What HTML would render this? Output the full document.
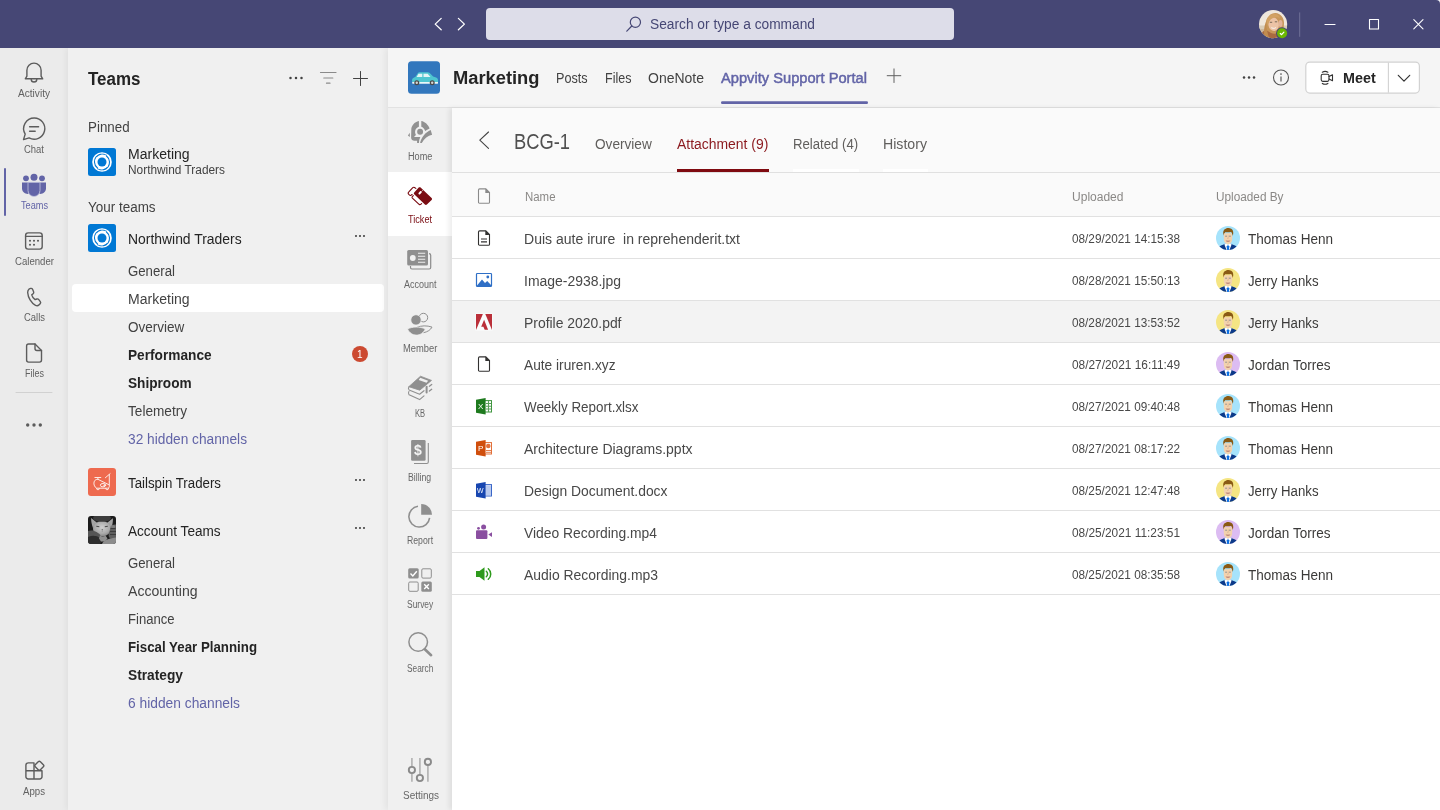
<!DOCTYPE html>
<html lang="en">
<head>
<meta charset="utf-8">
<title>Marketing - Appvity Support Portal</title>
<style>
*{box-sizing:border-box;margin:0;padding:0}
html,body{width:1440px;height:810px;overflow:hidden;background:#f5f5f5}
body{font-family:"Liberation Sans",sans-serif;color:#252423;position:relative}
.a{position:absolute}
.t{position:absolute;white-space:pre;line-height:1;transform-origin:0 50%}
svg{position:absolute;overflow:visible}
#titlebar{left:0;top:0;width:1440px;height:48px;background:#464775}
#search{left:486px;top:8px;width:468px;height:32px;border-radius:4px;background:#dddde9}
#rail{left:0;top:48px;width:68px;height:762px;background:#ebebeb}
#list{left:68px;top:48px;width:320px;height:762px;background:#f0f0f0;box-shadow:-2px 0 6px rgba(0,0,0,.05)}
#main{left:388px;top:48px;width:1052px;height:762px;background:#f5f5f5;box-shadow:-3px 0 6px rgba(0,0,0,.055)}
#hdrline{left:388px;top:107px;width:1052px;height:1px;background:#e2e2e2}
#appnav{left:388px;top:108px;width:64px;height:702px;background:#f0f0f0}
#navsel{left:388px;top:172px;width:64px;height:64px;background:#fff}
#content{left:452px;top:108px;width:988px;height:702px;background:#fff;box-shadow:-3px 0 5px rgba(0,0,0,.075)}
#subhdr{left:452px;top:108px;width:988px;height:64px;background:#fafafa}
#subline{left:452px;top:172px;width:988px;height:1px;background:#e0e0e0}
#thead{left:452px;top:173px;width:988px;height:43px;background:#fafafa}
.ln{position:absolute;left:452px;width:988px;height:1px;background:#e1e1e1}
#hover{left:452px;top:301px;width:988px;height:41px;background:#f3f3f3}
#chsel{left:72px;top:284px;width:312px;height:28px;border-radius:4px;background:#fff}
.av{position:absolute;width:24px;height:24px;border-radius:50%;left:1216px;overflow:hidden}
</style>
</head>
<body>
<div id="rail" class="a"></div>
<div id="list" class="a"></div>
<div id="chsel" class="a"></div>
<div id="main" class="a"></div>
<div id="hdrline" class="a"></div>
<div id="appnav" class="a"></div>
<div id="navsel" class="a"></div>
<div id="content" class="a"></div>
<div id="subhdr" class="a"></div>
<div id="subline" class="a"></div>
<div id="thead" class="a"></div>
<div id="hover" class="a"></div>
<div id="titlebar" class="a"></div>
<div id="search" class="a"></div>
<div class="ln" style="top:216px"></div>
<div class="ln" style="top:258px"></div>
<div class="ln" style="top:300px"></div>
<div class="ln" style="top:342px"></div>
<div class="ln" style="top:384px"></div>
<div class="ln" style="top:426px"></div>
<div class="ln" style="top:468px"></div>
<div class="ln" style="top:510px"></div>
<div class="ln" style="top:552px"></div>
<div class="ln" style="top:594px"></div>

<!-- rail icons -->
<svg style="left:0;top:0" width="68" height="810" viewBox="0 0 68 810" fill="none" stroke="#5c5c5c" stroke-width="1.4" stroke-linecap="round" stroke-linejoin="round">
<!-- bell -->
<path d="M26.9 76.2v-6a7.1 7.1 0 0 1 14.2 0v6l1.6 2.6h-17.4z"/>
<path d="M31.2 79.2a2.8 2.8 0 0 0 5.6 0"/>
<!-- chat -->
<path d="M34.3 118a10.6 10.6 0 1 1-5.2 19.9l-5.6 1.7 1.7-5.5A10.6 10.6 0 0 1 34.3 118z"/>
<path d="M29.6 126.7h9M29.6 131.3h5.6"/>
<!-- calendar -->
<rect x="25.6" y="232.9" width="16.6" height="16.2" rx="2.6"/>
<path d="M25.6 236.4h16.6"/>
<g fill="#5c5c5c" stroke="none"><circle cx="30" cy="240.8" r="1.05"/><circle cx="34" cy="240.8" r="1.05"/><circle cx="38" cy="240.8" r="1.05"/><circle cx="30" cy="244.8" r="1.05"/><circle cx="34" cy="244.8" r="1.05"/></g>
<!-- calls -->
<path d="M29.6 288.2l1.6-.5c1-.3 2 .2 2.400 1.100l1.300 3c.4.900.1 1.900-.600 2.500l-1.700 1.400c.5 1.900 2.400 4.800 4.200 5.900l2.100-.7c.9-.3 1.900 0 2.500.8l1.900 2.500c.6.800.5 1.900-.200 2.600l-1.200 1.200c-1.200 1.200-3 1.600-4.600.8-5.500-2.800-9.300-9.700-9.800-16.100-.1-1.900 1-3.500 2.100-4.500z" transform="translate(34.150 297) scale(.8) translate(-35.600 -298.400)" vector-effect="non-scaling-stroke"/>
<!-- files -->
<path d="M28.600 344h6.400l6.500 6.500v9.600a2 2 0 0 1-2 2h-10.900a2 2 0 0 1-2-2v-14.100a2 2 0 0 1 2-2z"/>
<path d="M35 344v4.500a2 2 0 0 0 2 2h4.500"/>
<!-- sep -->
<path d="M16 392.500h36" stroke="#d1d1d1" stroke-width="1"/>
<!-- dots -->
<g fill="#5c5c5c" stroke="none"><circle cx="27.700" cy="425" r="1.700"/><circle cx="34" cy="425" r="1.700"/><circle cx="40.300" cy="425" r="1.700"/></g>
<!-- apps -->
<path d="M34 762.900v16.100M25.900 770.800h16.100M28.200 762.900h5.800M25.900 765.200a2.300 2.300 0 0 1 2.300-2.300M25.900 765.200v11.500a2.300 2.300 0 0 0 2.300 2.300h11.500a2.300 2.300 0 0 0 2.300-2.300v-5.900"/>
<rect x="35.700" y="762.100" width="7.200" height="7.200" rx="1.500" transform="rotate(45 39.300 765.700)"/>
</svg>
<!-- teams icon (active) -->
<svg style="left:0;top:160px" width="68" height="60" viewBox="0 160 68 60">
<rect x="4" y="168" width="2" height="48" rx="1" fill="#6264a7"/>
<g fill="#6264a7">
<circle cx="26" cy="178.300" r="2.900"/><circle cx="42" cy="178.300" r="2.900"/><circle cx="34" cy="177.300" r="3.500"/>
<path d="M22 182.600h6.500v11.300c-3.700.300-6.500-2.300-6.500-5.400z"/>
<path d="M46 182.600h-6.500v11.300c3.700.300 6.500-2.300 6.500-5.400z"/>
<path d="M28 182.300h12v8.200a6 6 0 0 1-12 0z" stroke="#c5c6e0" stroke-width="0.800"/>
</g>
</svg>
<!-- title bar -->
<svg style="left:0;top:0" width="1440" height="48" viewBox="0 0 1440 48" fill="none" stroke="#fff" stroke-width="1.1" stroke-linecap="round" stroke-linejoin="round">
<path d="M441.200 18.400l-6 5.700 6 5.700M458.400 18.400l6 5.700-6 5.700" stroke-width="1.300"/>
<g stroke="#464775" stroke-width="1.200"><circle cx="635.400" cy="22.200" r="5.100"/><path d="M631.800 26l-5 5.200"/></g>
<path d="M1299.700 12.800v23.600" stroke="#6f7097" stroke-width="1"/>
<path d="M1325 24.500h10"/>
<rect x="1369.500" y="19.500" width="9" height="9.500"/>
<path d="M1413.800 19.600l9.200 9.200M1423 19.600l-9.200 9.200"/>
</svg>
<!-- window corner -->
<svg style="left:1436px;top:0" width="4" height="4" viewBox="0 0 4 4"><path d="M0 0h4v4a4 4 0 0 0-4-4z" fill="#f3f3f8"/></svg>
<!-- user avatar -->
<svg style="left:1259px;top:9.800px" width="29" height="29" viewBox="0 0 29 29">
<defs><clipPath id="uav"><circle cx="14.100" cy="14.100" r="14.100"/></clipPath>
<filter id="ubl" x="-20%" y="-20%" width="140%" height="140%"><feGaussianBlur stdDeviation=".5"/></filter></defs>
<g clip-path="url(#uav)">
<rect width="29" height="29" fill="#efe7dc"/>
<g filter="url(#ubl)">
<rect x="-5" y="15.500" width="39" height="4" fill="#d9cdb8"/>
<rect x="-5" y="19" width="39" height="15" fill="#cdb79c"/>
<path d="M6 30c-1-5 0-9 1-12-1-5 0-9 3-12 2.500-3 7-4 10-2 3 1.500 5 5 5 9 0 5-1 8-3 11l-1 6z" fill="#c8975a"/>
<ellipse cx="14.600" cy="14.200" rx="5.300" ry="6.800" fill="#ecc3a6" transform="rotate(-8 14.600 14.200)"/>
<path d="M8 9c1.500-3.500 5-5.500 8.500-5 2.500.5 4 2 4.600 4.500-2.500-1.500-5-1.500-7.500-.2-2.500 1.200-4 3.500-4.600 7.200-1.200-2-1.700-4.300-1-6.500z" fill="#d2a163"/>
<path d="M1 30c0-5 2-9 6-10l5 3c2 1 5 1 7 0l1 7z" fill="#a96a40"/>
<path d="M7 12c-2 4-2.500 10-1.500 16l5 1c-2-5-3-11-3.500-17z" fill="#c18c50"/>
<ellipse cx="21.500" cy="13.500" rx="2" ry="3.500" fill="#e3b49a"/>
<path d="M10.800 12.300h2.400M15.800 11.800h2.400" stroke="#7d6a58" stroke-width="1"/>
<path d="M12.300 17.500c1.300 1 3.300 1 4.700-.2" stroke="#f5eae2" stroke-width="1.100" fill="none"/>
</g>
</g>
<circle cx="23.100" cy="23.200" r="6" fill="#464775"/>
<circle cx="23.100" cy="23.200" r="5" fill="#6bb700"/>
<path d="M21.300 23.500l1.300 1.200 2.300-2.600" fill="none" stroke="#fff" stroke-width="1.200" stroke-linecap="round" stroke-linejoin="round"/>
</svg>
<!-- list header icons -->
<svg style="left:68px;top:48px" width="320" height="60" viewBox="68 48 320 60" fill="none" stroke="#424242" stroke-width="1" stroke-linecap="round">
<g fill="#424242" stroke="none"><circle cx="290.500" cy="78" r="1.250"/><circle cx="296" cy="78" r="1.250"/><circle cx="301.500" cy="78" r="1.250"/></g>
<path d="M320.500 72.500h15.500M323.800 78h9M326.500 83.200h3.500" stroke="#8a8a8a" stroke-width="1.200"/>
<path d="M353.500 78.500h14M360.500 71.500v14"/>
</svg>
<!-- team dots -->
<svg style="left:350px;top:230px" width="20" height="310" viewBox="350 230 20 310" fill="#424242">
<circle cx="356" cy="236" r="1.050"/><circle cx="360" cy="236" r="1.050"/><circle cx="364" cy="236" r="1.050"/>
<circle cx="356" cy="480" r="1.050"/><circle cx="360" cy="480" r="1.050"/><circle cx="364" cy="480" r="1.050"/>
<circle cx="356" cy="528" r="1.050"/><circle cx="360" cy="528" r="1.050"/><circle cx="364" cy="528" r="1.050"/>
</svg>
<!-- badge -->
<div class="a" style="left:352px;top:346px;width:16px;height:16px;border-radius:50%;background:#cc4a31"></div>
<!-- northwind logos -->
<svg style="left:88px;top:148px" width="28" height="28" viewBox="0 0 28 28"><defs><g id="nw"><rect width="28" height="28" rx="2.500" fill="#0078d4"/><circle cx="14" cy="14" r="9.800" fill="#fff"/><g fill="none" stroke="#0078d4" stroke-linecap="round"><path d="M12.300 6.200c-3.500 1-6 4.300-5.800 8 .1 2.500 1.300 4.500 3 5.800" stroke-width="1.100"/><path d="M15.700 21.800c3.500-1 6-4.300 5.800-8-.1-2.500-1.300-4.500-3-5.800" stroke-width="1.100"/><path d="M9.500 20.800c3.300 2 7.600 1.300 10-1.600" stroke-width=".9"/><path d="M18.500 7.200c-3.300-2-7.600-1.300-10 1.600" stroke-width=".9"/></g><circle cx="14" cy="14" r="4.500" fill="#0078d4"/></g></defs><use href="#nw"/></svg>
<svg style="left:88px;top:224px" width="28" height="28" viewBox="0 0 28 28"><use href="#nw"/></svg>
<!-- tailspin -->
<svg style="left:88px;top:468px" width="28" height="28" viewBox="0 0 28 28"><rect width="28" height="28" rx="3" fill="#ee6a4f"/>
<g fill="none" stroke="#fdeae5" stroke-width="1" stroke-linecap="round" stroke-linejoin="round">
<path d="M6.900 9.500h5.900M9.900 9.500v1.800M17.400 9.700l4.700-4"/>
<path d="M21.300 6.500v12c0 1-.8 1.700-1.900 1.700H8.700c-2.500-1.200-3.500-4.700-2.300-7.100.7-1.300 2-1.800 3.500-1.800l10.700 5.300"/>
<ellipse cx="15" cy="17.200" rx="2.700" ry="1.700"/><circle cx="16.500" cy="17.500" r=".7"/>
<path d="M8.600 20.400l.5 1.200h1.700l.5-1.200M17.800 20.400l.5 1.200h1.700l.5-1.200"/>
</g></svg>
<!-- cat -->
<svg style="left:88px;top:516px" width="28" height="28" viewBox="0 0 28 28">
<defs><clipPath id="catc"><rect width="28" height="28" rx="3"/></clipPath>
<filter id="cbl" x="-20%" y="-20%" width="140%" height="140%"><feGaussianBlur stdDeviation=".7"/></filter>
<radialGradient id="catf" cx="50%" cy="40%" r="60%"><stop offset="0" stop-color="#cfcfcf"/><stop offset=".7" stop-color="#a9a9a9"/><stop offset="1" stop-color="#858585"/></radialGradient></defs>
<g clip-path="url(#catc)">
<rect width="28" height="28" fill="#1b1b1b"/>
<g filter="url(#cbl)">
<ellipse cx="14" cy="2" rx="9" ry="4" fill="#3d3d3d"/>
<path d="M3.100 2l5.600 4.600-3.700 5.400c-1.200-3-2-7-1.900-10zM24.900 2.200l-5.400 4.400 3.900 5.400c1-3 1.700-6.800 1.500-9.800z" fill="#a5a5a5"/>
<path d="M6.500 7.500c2-1.800 5-2 7.500-1.800 2.500-.2 5.500 0 7.500 1.800 1.500 2 2 5 1 8-1 2.500-4.500 4.800-8.500 4.800s-7.500-2.300-8.500-4.800c-1-3-.5-6 1-8z" fill="url(#catf)"/>
<path d="M0 15c2.500-1 6-.8 8.500 1l3 2c1.500 1.500 1.500 3.500 0 5l-4 2H0z" fill="#575757"/>
<path d="M28 8.500c-2.500-.5-5 1-5.500 3.500l-1.500 5c-.8 2-.5 4.500 1.500 5.500h5.500z" fill="#5f5f5f"/>
<path d="M22.500 12.500h5M22 15.500h6M22 18.500h6" stroke="#3a3a3a" stroke-width=".9"/>
<ellipse cx="25" cy="10.500" rx="2.300" ry="1.500" fill="#7c7c7c"/>
<path d="M0 21c4-2 9-1.500 12 1l2 3-2 3H0z" fill="#2e2e2e"/>
<path d="M12 19.500c1.500 1.200 4 1.200 5.500 0l2 3-2.500 3h-4l-2-3z" fill="#8f8f8f"/>
<path d="M14 28c1-3 5-5.500 14-6.500V28z" fill="#8c8c8c"/>
<path d="M8.300 10.300l3 .5M19.800 10.300l-3 .5" stroke="#4a4a4a" stroke-width="1.100" fill="none"/>
<path d="M13.400 13h1.700l-.85 1.200z" fill="#6a6a6a"/>
<path d="M14.250 14.200v1.500" stroke="#7a7a7a" stroke-width=".6"/>
</g></g></svg>
<!-- channel header -->
<svg style="left:408px;top:61px" width="32" height="33" viewBox="0 0 32 32.500">
<rect width="32" height="32.500" rx="3.500" fill="#3277bd"/>
<path d="M4.200 20.800c-.5-1.500-.2-3.200 1-4l2.300-1.300 2.300-3.600c.4-.6 1-.9 1.700-.9h8.300c.7 0 1.400.3 1.900.8l3.400 3.500 3 1c1.200.4 1.900 1.500 1.900 2.700v1.800z" fill="#4fc6d0"/>
<path d="M4.200 20.800h25.800v.9c0 .5-.4.900-.9.900H5.200c-.5 0-1-.4-1-.9z" fill="#e8f7f8"/>
<path d="M10.500 12.500h3.800v3.300H8.600zM15.500 12.500h4.200l2.800 3.300h-7z" fill="#e4f4f6"/>
<circle cx="8.800" cy="21.500" r="2.500" fill="#4a4a4a"/><circle cx="8.800" cy="21.500" r="1.200" fill="#d6d6d6"/>
<circle cx="24.200" cy="21.500" r="2.500" fill="#4a4a4a"/><circle cx="24.200" cy="21.500" r="1.200" fill="#d6d6d6"/>
</svg>
<svg style="left:715px;top:98px" width="160" height="10" viewBox="715 98 160 10"><rect x="721" y="101.300" width="147" height="2.700" rx="1.350" fill="#6264a7"/></svg>
<svg style="left:880px;top:60px" width="30" height="30" viewBox="880 60 30 30" fill="none" stroke="#616161" stroke-width="1" stroke-linecap="round"><path d="M887.200 75.700h13.600M894 68.900v13.600"/></svg>
<svg style="left:1236px;top:60px" width="60" height="36" viewBox="1236 60 60 36" fill="none" stroke="#424242" stroke-width="1.100">
<g fill="#424242" stroke="none"><circle cx="1244" cy="77.600" r="1.250"/><circle cx="1249" cy="77.600" r="1.250"/><circle cx="1254" cy="77.600" r="1.250"/></g>
<circle cx="1281" cy="77.500" r="7.500" stroke="#555"/>
<path d="M1281 76.400v5" stroke="#666" stroke-width="1.300"/><circle cx="1281" cy="74" r=".850" fill="#555" stroke="none"/>
</svg>
<svg style="left:1300px;top:56px" width="130" height="44" viewBox="1300 56 130 44"><rect x="1305.800" y="62.100" width="113.600" height="31" rx="4" fill="#fff" stroke="#d2d2d2" stroke-width="1.200"/><path d="M1388.400 62.500v30.200" stroke="#d2d2d2" stroke-width="1.100"/></svg>
<svg style="left:1316px;top:66px" width="100" height="24" viewBox="1316 66 100 24" fill="none" stroke="#333" stroke-width="1.100" stroke-linecap="round" stroke-linejoin="round">
<rect x="1321.200" y="74.200" width="7.800" height="7.200" rx="1.600"/>
<path d="M1329 76.600l3.500-1.800v6l-3.500-1.800M1322.300 72.200a5.600 5.600 0 0 1 5.600 0M1322.300 83.400a5.600 5.600 0 0 0 5.600 0"/>
<path d="M1398.300 75.300l5.700 5.800 5.700-5.800" stroke-width="1.200"/>
</svg>
<!-- sub header -->
<svg style="left:470px;top:125px" width="30" height="30" viewBox="470 125 30 30" fill="none" stroke="#424242" stroke-width="1.100" stroke-linecap="round" stroke-linejoin="round"><path d="M488.500 132l-8.700 8.200 8.700 8.200"/></svg>
<div class="a" style="left:677px;top:169px;width:92px;height:3px;background:#7f0a10"></div>
<div class="a" style="left:793px;top:169px;width:66px;height:3px;background:#fff"></div>
<div class="a" style="left:883px;top:169px;width:45px;height:3px;background:#fff"></div>
<!-- app nav icons -->
<svg style="left:388px;top:108px" width="64" height="702" viewBox="388 108 64 702">
<g fill="#8f8f8f">
<!-- home -->
<g fill="#919191">
<path d="M418.9 120.9C414.4 121.8 411.4 125.6 411.3 129.4L411.1 137.4C411.1 139.5 412.7 140.7 414.4 140.7L417.1 140.7L417.1 142.9L418.9 142.9C418.9 140.8 419.4 138.8 420.3 136.9L414.0 136.9L415.9 135.0C414.0 131.1 415.8 127.7 418.9 126.7z"/>
<path d="M407.9 135.5L409.8 132.7L409.8 136.9z"/>
<path d="M421.3 120.9C425.1 121.6 428.2 124.6 429.6 128.4C427.9 129.1 426.5 129.9 425.2 130.9C424.4 128.7 423.0 127.2 421.3 126.7z"/>
<path d="M420.1 143.0C421.3 137.4 425.5 132.2 430.7 130.0L432.1 134.7C427.9 135.6 424.1 138.4 421.8 143.0z"/>
<circle cx="420.100" cy="131.800" r="2.950"/>
</g>
<!-- ticket -->
<path d="M420.600 187.500l11 10.500c.6.600.6 1.400 0 2l-4.700 4.500c-.6.500-1.400.500-2 0l-10.700-10.300c-.5-.5-.5-1.300 0-1.800l4.500-4.800c.5-.6 1.300-.6 1.900-.1z" fill="#7a0c12"/>
<path d="M419.400 193.500l1.400-1.500" stroke="#fff" stroke-width="1.900" stroke-linecap="round" fill="none"/>
<path d="M421.800 191.200l1.400-1.300" stroke="#fff" stroke-width=".6" fill="none"/>
<g fill="none" stroke="#7a0c12" stroke-width="1.150" stroke-linejoin="round" stroke-linecap="round">
<path d="M415.800 188.400l-1.300-.9c-.6-.4-1.200-.3-1.700.2l-4.200 4.400c-.5.500-.6 1.200-.2 1.700l1 1.200c.4.500 1 .6 1.500.3l1.200-.8"/>
<path d="M413.300 195.600l-1 1c-.4.500-.4 1 .1 1.500l6.700 6.200c.5.400 1.100.5 1.600.1l.9-.8"/>
</g>
<!-- account -->
<g fill="none" stroke="#8a8a8a" stroke-width="1.200"><path d="M429 253.600c1 0 1.700.7 1.700 1.600v12.300c0 .8-.7 1.500-1.500 1.500h-17.200c-.9 0-1.500-.6-1.500-1.500v-1.500"/></g>
<rect x="407.200" y="250" width="20.800" height="15.600" rx="1.500" fill="#8f8f8f"/>
<circle cx="412.800" cy="258" r="2.900" fill="#f0f0f0"/>
<path d="M418 253.300h7.200M418 256.300h7.200M418 259.300h7.200M418 262.300h7.200" stroke="#f0f0f0" stroke-width="1.100" fill="none"/>
<!-- member -->
<g fill="none" stroke="#8f8f8f" stroke-width="1"><circle cx="423.400" cy="317.600" r="4.300"/><path d="M417 327.300c4-1.700 10-2 15-.2-1.400 2.800-4.500 4.800-8.500 5.600"/></g>
<circle cx="416" cy="319.900" r="5.200" fill="#8f8f8f" stroke="#f0f0f0" stroke-width=".8"/>
<path d="M407.500 329c5-2.600 12.400-2.600 17.800-.1-2 4.300-5.200 6.200-8.900 6.200s-7-2-8.900-6.100z" fill="#8f8f8f" stroke="#f0f0f0" stroke-width=".8"/>
<!-- KB -->
<path d="M408.800 386.700l11.700-10.500 11 4.200-11.800 9.800z" fill="#8f8f8f" stroke="#8f8f8f" stroke-width=".8" stroke-linejoin="round"/>
<path d="M420.300 377.800l7.900 2.900-1.700 2.100-7.800-2.800z" fill="#f0f0f0"/>
<g stroke="#8f8f8f" stroke-width="1.100" stroke-linejoin="round" stroke-linecap="round" fill="none">
<path d="M408.900 386.900c-.6 1-.5 2.300.2 3.100l10.500 4.200 4.400-3.500"/>
<path d="M408.900 391.500c-.6 1-.5 2.400.2 3.300l10.500 4.800 4.400-3.800"/>
<path d="M426.600 386.700v5.700" stroke-width="2"/>
<path d="M429.400 386.200l2.300-1.700M429.400 391.100l2.300-1.800" stroke-width="1.300"/>
</g>
<!-- billing -->
<path d="M428.300 443v19c0 .8-.7 1.500-1.500 1.500h-12.800" fill="none" stroke="#8f8f8f" stroke-width="1.100"/>
<rect x="411.100" y="440" width="14.500" height="20.800" rx="1.200" fill="#8f8f8f"/>
<!-- report -->
<path d="M418 506.300a10.400 10.400 0 1 0 11.600 11.600" fill="none" stroke="#8f8f8f" stroke-width="1.600"/>
<path d="M421.200 504v10.800h10.800a10.800 10.800 0 0 0-10.800-10.800z" fill="#8f8f8f"/>
<!-- survey -->
<rect x="408.200" y="568.300" width="10.500" height="10.300" rx="1.500" fill="#8f8f8f"/>
<rect x="421.300" y="581.500" width="10.500" height="10.300" rx="1.500" fill="#8f8f8f"/>
<rect x="421.800" y="568.800" width="9.500" height="9.300" rx="1.200" fill="none" stroke="#8f8f8f" stroke-width="1"/>
<rect x="408.700" y="582" width="9.500" height="9.300" rx="1.200" fill="none" stroke="#8f8f8f" stroke-width="1"/>
<path d="M410.500 573.600l2.300 2.300 4-4.700M424.200 584.300l4.700 4.700M428.900 584.300l-4.700 4.700" fill="none" stroke="#fff" stroke-width="1.400"/>
<!-- search -->
<circle cx="418.200" cy="642" r="9.300" fill="none" stroke="#8f8f8f" stroke-width="1.500"/>
<path d="M424.800 649.200l6.300 6" stroke="#8f8f8f" stroke-width="2.600" stroke-linecap="round"/>
<!-- settings -->
<g fill="none" stroke="#b4b4b4" stroke-width="1.700"><path d="M411.900 758v8.500M411.900 773.500v8.200M419.900 758v16.500M427.900 765.500v16.200"/></g>
<g fill="none" stroke="#8a8a8a" stroke-width="1.900"><circle cx="411.900" cy="770" r="3.100"/><circle cx="419.900" cy="778" r="3.100"/><circle cx="427.900" cy="761.900" r="3.100"/></g>
</svg>
<svg style="left:0;top:0" width="0" height="0"><defs>
<g id="fdoc"><path d="M1.600 .6h6.200l3.700 3.700v9.600c0 .6-.5 1.100-1.100 1.100H1.600c-.6 0-1.100-.5-1.100-1.100V1.700c0-.6.500-1.100 1.100-1.100z" fill="none" stroke="currentColor" stroke-width="1.100"/><path d="M7.300 .3l4.400 4.400h-4.400z" fill="currentColor"/></g>
<g id="ava">
<path d="M7.300 7.800c-.6-2.600.8-4.600 2.500-5 .5-.9 2.600-.8 4-.5 2 .4 3.800 2 3.400 5.600l-.5 2.200c-.3-2-1-3.400-1.600-4-2 .3-4.600.3-6 .1-.7 1-1 2.300-1 3.900z" fill="#8a5a14"/>
<path d="M8.200 7.200c1.800.3 4.500.2 6.600-.4.800.8 1.300 2.200 1.500 3.700l-.3 4.200c-.2 1-1.400 2.500-2.400 3.100l-1.600.8-1.600-.8c-1-.6-2.200-2-2.400-3.100l-.3-4c.1-1.500.2-2.700.5-3.500z" fill="#f2d2ae"/>
<path d="M9.600 14.200c1.400.5 3.400.5 4.800 0-.4 1.200-1.300 1.900-2.400 1.900s-2-.7-2.400-1.900z" fill="#c48f7e"/>
<path d="M9.400 10.200h1.300M13.300 10.200h1.300" stroke="#5d6f80" stroke-width=".9"/>
<path d="M12.300 9.500l-.2 3h-.8" stroke="#d9ac86" stroke-width=".6" fill="none"/>
<path d="M2 24c.2-3 2-4.600 5-5.200l2.600-1.400 2.400 2 2.400-2 2.600 1.400c3 .6 4.800 2.200 5 5.200z" fill="#0c3a8a"/>
<path d="M9.400 17.300l2.600 1.500 2.600-1.500 1 1.300-2.100 5.400h-3l-2.100-5.400z" fill="#fff"/>
<path d="M11.200 19.400h1.600l.6 1.200-.5 3.400h-1.800l-.5-3.400z" fill="#0b6fe3"/>
</g>
</defs></svg>
<svg style="left:478px;top:188.3px;color:#8a8a8a" width="12" height="16" viewBox="0 0 12 15.500"><use href="#fdoc"/></svg>
<svg style="left:478px;top:230px;color:#323130" width="12" height="16" viewBox="0 0 12 15.500"><use href="#fdoc"/><path d="M3 8.800h6M3 11.600h6" stroke="currentColor" stroke-width="1.100" fill="none"/></svg>
<svg style="left:478px;top:356.2px;color:#323130" width="12" height="16" viewBox="0 0 12 15.500"><use href="#fdoc"/></svg>
<svg style="left:476px;top:273px" width="16" height="14" viewBox="0 0 16 14"><rect x=".5" y=".5" width="15" height="13" rx=".8" fill="#fff" stroke="#2f6fc6" stroke-width="1.200"/><path d="M1 12.500l5-6 3 3.400 2.200-2 3.800 4v1.100H1z" fill="#2f6fc6"/><circle cx="11.800" cy="4" r="1.400" fill="#2f6fc6"/></svg>
<svg style="left:476px;top:314px" width="16" height="16" viewBox="0 0 16 16"><rect x="-.6" y="-.6" width="17.200" height="17.200" fill="#fafcfc"/><g fill="#ba2f39"><path d="M0 0h6.900L0 16z"/><path d="M9.300 0H16v16z"/><path d="M8.100 5.700l4 10H8.700l-1.300-2.900H5.200z"/></g></svg>
<svg style="left:476px;top:398px" width="16" height="17" viewBox="0 0 16 17"><rect x="8.500" y="2.600" width="7" height="11.400" fill="#fff" stroke="#3f963f" stroke-width="1"/><path d="M10 5.500h5M10 8.300h5M10 11h5M12.500 3v11" stroke="#5aa05a" stroke-width="1.100"/><path d="M0 1.700L9.600 0v16.500L0 14.800z" fill="#1e7a1e"/></svg>
<svg style="left:476px;top:440px" width="16" height="17" viewBox="0 0 16 17"><rect x="8.500" y="2.600" width="7" height="11.400" fill="#fff" stroke="#e2703a" stroke-width="1"/><circle cx="12.300" cy="6" r="2.300" fill="#e2703a"/><path d="M10 10.500h5M10 12.300h5" stroke="#e2703a" stroke-width=".9"/><path d="M0 1.700L9.600 0v16.500L0 14.800z" fill="#d04e0c"/></svg>
<svg style="left:476px;top:482px" width="16" height="17" viewBox="0 0 16 17"><rect x="8.500" y="2.600" width="7" height="11.400" fill="#fff" stroke="#3a66c8" stroke-width="1"/><path d="M10 5h5M10 7h5M10 9h5M10 11h5M10 13h5" stroke="#7f9fe0" stroke-width="1.100"/><rect x="9" y="3" width="6" height="10.500" fill="#b9c9ee" opacity=".7"/><path d="M0 1.700L9.600 0v16.500L0 14.800z" fill="#1746b0"/></svg>
<svg style="left:476px;top:524px" width="16" height="16" viewBox="0 0 16 16" fill="#8a4fa0"><rect x="0" y="6.300" width="11.400" height="8.600" rx="1"/><path d="M12.300 10.600l3.700-2.300v4.800z"/><circle cx="2.500" cy="4.300" r="1.400"/><circle cx="7.600" cy="3.100" r="2.500"/></svg>
<svg style="left:476px;top:567px" width="16" height="14" viewBox="0 0 16 14"><path d="M0 4h3.500L8.500 .2v13.600L3.500 10H0z" fill="#2e9a1c"/><path d="M10.300 4.200a3.700 3.700 0 0 1 0 5.600M12.300 1.700a7 7 0 0 1 0 10.600" fill="none" stroke="#2e9a1c" stroke-width="1.500" stroke-linecap="round"/></svg>
<svg style="left:1216px;top:225.8px" width="24" height="24" viewBox="0 0 24 24"><defs><clipPath id="ac0"><circle cx="12" cy="12" r="12"/></clipPath></defs><g clip-path="url(#ac0)"><rect width="24" height="24" fill="#a6e3fb"/><use href="#ava"/></g></svg>
<svg style="left:1216px;top:267.8px" width="24" height="24" viewBox="0 0 24 24"><defs><clipPath id="ac1"><circle cx="12" cy="12" r="12"/></clipPath></defs><g clip-path="url(#ac1)"><rect width="24" height="24" fill="#f5e583"/><use href="#ava"/></g></svg>
<svg style="left:1216px;top:309.8px" width="24" height="24" viewBox="0 0 24 24"><defs><clipPath id="ac2"><circle cx="12" cy="12" r="12"/></clipPath></defs><g clip-path="url(#ac2)"><rect width="24" height="24" fill="#f5e583"/><use href="#ava"/></g></svg>
<svg style="left:1216px;top:351.8px" width="24" height="24" viewBox="0 0 24 24"><defs><clipPath id="ac3"><circle cx="12" cy="12" r="12"/></clipPath></defs><g clip-path="url(#ac3)"><rect width="24" height="24" fill="#dcbcf2"/><use href="#ava"/></g></svg>
<svg style="left:1216px;top:393.8px" width="24" height="24" viewBox="0 0 24 24"><defs><clipPath id="ac4"><circle cx="12" cy="12" r="12"/></clipPath></defs><g clip-path="url(#ac4)"><rect width="24" height="24" fill="#a6e3fb"/><use href="#ava"/></g></svg>
<svg style="left:1216px;top:435.8px" width="24" height="24" viewBox="0 0 24 24"><defs><clipPath id="ac5"><circle cx="12" cy="12" r="12"/></clipPath></defs><g clip-path="url(#ac5)"><rect width="24" height="24" fill="#a6e3fb"/><use href="#ava"/></g></svg>
<svg style="left:1216px;top:477.8px" width="24" height="24" viewBox="0 0 24 24"><defs><clipPath id="ac6"><circle cx="12" cy="12" r="12"/></clipPath></defs><g clip-path="url(#ac6)"><rect width="24" height="24" fill="#f5e583"/><use href="#ava"/></g></svg>
<svg style="left:1216px;top:519.8px" width="24" height="24" viewBox="0 0 24 24"><defs><clipPath id="ac7"><circle cx="12" cy="12" r="12"/></clipPath></defs><g clip-path="url(#ac7)"><rect width="24" height="24" fill="#dcbcf2"/><use href="#ava"/></g></svg>
<svg style="left:1216px;top:561.8px" width="24" height="24" viewBox="0 0 24 24"><defs><clipPath id="ac8"><circle cx="12" cy="12" r="12"/></clipPath></defs><g clip-path="url(#ac8)"><rect width="24" height="24" fill="#a6e3fb"/><use href="#ava"/></g></svg>

<div class="t" style="left:649.50px;top:17px;font-size:14px;color:#464775;transform:scaleX(0.9816);">Search or type a command</div>
<div class="t" style="left:18.00px;top:89px;font-size:10px;color:#616161;transform:scaleX(1.0104);">Activity</div>
<div class="t" style="left:24.00px;top:145px;font-size:10px;color:#616161;transform:scaleX(0.9467);">Chat</div>
<div class="t" style="left:20.50px;top:201px;font-size:10px;color:#6264a7;transform:scaleX(0.9167);">Teams</div>
<div class="t" style="left:14.50px;top:257px;font-size:10px;color:#616161;transform:scaleX(0.9607);">Calender</div>
<div class="t" style="left:23.50px;top:313px;font-size:10px;color:#616161;transform:scaleX(0.9445);">Calls</div>
<div class="t" style="left:24.50px;top:369px;font-size:10px;color:#616161;transform:scaleX(0.8994);">Files</div>
<div class="t" style="left:23.00px;top:787px;font-size:10px;color:#616161;transform:scaleX(0.9650);">Apps</div>
<div class="t" style="left:88.40px;top:70px;font-size:18px;color:#242424;font-weight:bold;transform:scaleX(0.9425);">Teams</div>
<div class="t" style="left:88.40px;top:120px;font-size:14px;color:#424242;transform:scaleX(0.9543);">Pinned</div>
<div class="t" style="left:128.40px;top:147px;font-size:14px;color:#242424;transform:scaleX(1.0021);">Marketing</div>
<div class="t" style="left:128.40px;top:164px;font-size:12px;color:#424242;transform:scaleX(0.9893);">Northwind Traders</div>
<div class="t" style="left:88.40px;top:200px;font-size:14px;color:#424242;transform:scaleX(0.9614);">Your teams</div>
<div class="t" style="left:128.40px;top:232px;font-size:14px;color:#242424;transform:scaleX(0.9931);">Northwind Traders</div>
<div class="t" style="left:128.40px;top:264px;font-size:14px;color:#424242;transform:scaleX(0.9435);">General</div>
<div class="t" style="left:128.40px;top:292px;font-size:14px;color:#424242;transform:scaleX(1.0021);">Marketing</div>
<div class="t" style="left:128.40px;top:320px;font-size:14px;color:#424242;transform:scaleX(0.9647);">Overview</div>
<div class="t" style="left:128.40px;top:348px;font-size:14px;color:#242424;font-weight:bold;transform:scaleX(0.9767);">Performance</div>
<div class="t" style="left:128.40px;top:376px;font-size:14px;color:#242424;font-weight:bold;transform:scaleX(0.9733);">Shiproom</div>
<div class="t" style="left:128.40px;top:404px;font-size:14px;color:#424242;transform:scaleX(0.9722);">Telemetry</div>
<div class="t" style="left:128.40px;top:432px;font-size:14px;color:#6264a7;transform:scaleX(0.9799);">32 hidden channels</div>
<div class="t" style="left:128.40px;top:476px;font-size:14px;color:#242424;transform:scaleX(0.9485);">Tailspin Traders</div>
<div class="t" style="left:128.40px;top:524px;font-size:14px;color:#242424;transform:scaleX(0.9700);">Account Teams</div>
<div class="t" style="left:128.40px;top:556px;font-size:14px;color:#424242;transform:scaleX(0.9435);">General</div>
<div class="t" style="left:128.40px;top:584px;font-size:14px;color:#424242;transform:scaleX(1.0046);">Accounting</div>
<div class="t" style="left:128.40px;top:612px;font-size:14px;color:#424242;transform:scaleX(0.9355);">Finance</div>
<div class="t" style="left:128.40px;top:640px;font-size:14px;color:#242424;font-weight:bold;transform:scaleX(0.9491);">Fiscal Year Planning</div>
<div class="t" style="left:128.40px;top:668px;font-size:14px;color:#242424;font-weight:bold;transform:scaleX(0.9816);">Strategy</div>
<div class="t" style="left:128.40px;top:696px;font-size:14px;color:#6264a7;transform:scaleX(0.9854);">6 hidden channels</div>
<div class="t" style="left:357.22px;top:350px;font-size:10px;color:#fff;transform:scaleX(1.0005);">1</div>
<div class="t" style="left:452.50px;top:69px;font-size:18px;color:#242424;font-weight:bold;transform:scaleX(1.0173);">Marketing</div>
<div class="t" style="left:556.40px;top:71px;font-size:14px;color:#424242;transform:scaleX(0.9025);">Posts</div>
<div class="t" style="left:605.20px;top:71px;font-size:14px;color:#424242;transform:scaleX(0.8930);">Files</div>
<div class="t" style="left:648.20px;top:71px;font-size:14px;color:#424242;transform:scaleX(0.9992);">OneNote</div>
<div class="t" style="left:721.30px;top:71px;font-size:14px;color:#6264a7;-webkit-text-stroke:0.45px #6264a7;transform:scaleX(1.0481);">Appvity Support Portal</div>
<div class="t" style="left:1343.30px;top:71px;font-size:14px;color:#242424;font-weight:bold;transform:scaleX(1.0249);">Meet</div>
<div class="t" style="left:407.85px;top:152px;font-size:10px;color:#676767;transform:scaleX(0.9105);">Home</div>
<div class="t" style="left:408.00px;top:215px;font-size:10px;color:#7a0c12;transform:scaleX(0.9121);">Ticket</div>
<div class="t" style="left:403.75px;top:280px;font-size:10px;color:#676767;transform:scaleX(0.8993);">Account</div>
<div class="t" style="left:402.85px;top:344px;font-size:10px;color:#676767;transform:scaleX(0.9349);">Member</div>
<div class="t" style="left:414.95px;top:409px;font-size:10px;color:#676767;transform:scaleX(0.7569);">KB</div>
<div class="t" style="left:408.40px;top:473px;font-size:10px;color:#676767;transform:scaleX(0.8693);">Billing</div>
<div class="t" style="left:406.95px;top:536px;font-size:10px;color:#676767;transform:scaleX(0.8695);">Report</div>
<div class="t" style="left:406.85px;top:600px;font-size:10px;color:#676767;transform:scaleX(0.8450);">Survey</div>
<div class="t" style="left:406.85px;top:664px;font-size:10px;color:#676767;transform:scaleX(0.8300);">Search</div>
<div class="t" style="left:402.50px;top:791px;font-size:10px;color:#676767;transform:scaleX(0.9961);">Settings</div>
<div class="t" style="left:514.00px;top:132px;font-size:21.5px;color:#505050;transform:scaleX(0.8521);">BCG-1</div>
<div class="t" style="left:595.40px;top:137px;font-size:14px;color:#605e5c;transform:scaleX(0.9733);">Overview</div>
<div class="t" style="left:677.20px;top:137px;font-size:14px;color:#8b181d;transform:scaleX(0.9953);">Attachment (9)</div>
<div class="t" style="left:793.40px;top:137px;font-size:14px;color:#605e5c;transform:scaleX(0.9413);">Related (4)</div>
<div class="t" style="left:883.10px;top:137px;font-size:14px;color:#605e5c;transform:scaleX(1.0100);">History</div>
<div class="t" style="left:524.50px;top:191px;font-size:12px;color:#8a8886;transform:scaleX(0.9527);">Name</div>
<div class="t" style="left:1072.00px;top:191px;font-size:12px;color:#8a8886;transform:scaleX(1.0024);">Uploaded</div>
<div class="t" style="left:1216.00px;top:191px;font-size:12px;color:#8a8886;transform:scaleX(0.9823);">Uploaded By</div>
<div class="t" style="left:524.30px;top:232px;font-size:14px;color:#484848;transform:scaleX(1.0020);">Duis aute irure &nbsp;in reprehenderit.txt</div>
<div class="t" style="left:1072.00px;top:233px;font-size:12px;color:#484848;transform:scaleX(0.9808);">08/29/2021 14:15:38</div>
<div class="t" style="left:1248.00px;top:232px;font-size:14px;color:#3b3a39;transform:scaleX(0.9666);">Thomas Henn</div>
<div class="t" style="left:524.30px;top:274px;font-size:14px;color:#484848;transform:scaleX(0.9969);">Image-2938.jpg</div>
<div class="t" style="left:1072.00px;top:275px;font-size:12px;color:#484848;transform:scaleX(0.9808);">08/28/2021 15:50:13</div>
<div class="t" style="left:1248.00px;top:274px;font-size:14px;color:#3b3a39;transform:scaleX(0.9439);">Jerry Hanks</div>
<div class="t" style="left:524.30px;top:316px;font-size:14px;color:#484848;transform:scaleX(0.9941);">Profile 2020.pdf</div>
<div class="t" style="left:1072.00px;top:317px;font-size:12px;color:#484848;transform:scaleX(0.9808);">08/28/2021 13:53:52</div>
<div class="t" style="left:1248.00px;top:316px;font-size:14px;color:#3b3a39;transform:scaleX(0.9439);">Jerry Hanks</div>
<div class="t" style="left:524.30px;top:358px;font-size:14px;color:#484848;transform:scaleX(0.9799);">Aute iruren.xyz</div>
<div class="t" style="left:1072.00px;top:359px;font-size:12px;color:#484848;transform:scaleX(0.9888);">08/27/2021 16:11:49</div>
<div class="t" style="left:1248.00px;top:358px;font-size:14px;color:#3b3a39;transform:scaleX(0.9667);">Jordan Torres</div>
<div class="t" style="left:524.30px;top:400px;font-size:14px;color:#484848;transform:scaleX(0.9577);">Weekly Report.xlsx</div>
<div class="t" style="left:1072.00px;top:401px;font-size:12px;color:#484848;transform:scaleX(0.9808);">08/27/2021 09:40:48</div>
<div class="t" style="left:1248.00px;top:400px;font-size:14px;color:#3b3a39;transform:scaleX(0.9666);">Thomas Henn</div>
<div class="t" style="left:524.30px;top:442px;font-size:14px;color:#484848;transform:scaleX(0.9980);">Architecture Diagrams.pptx</div>
<div class="t" style="left:1072.00px;top:443px;font-size:12px;color:#484848;transform:scaleX(0.9808);">08/27/2021 08:17:22</div>
<div class="t" style="left:1248.00px;top:442px;font-size:14px;color:#3b3a39;transform:scaleX(0.9666);">Thomas Henn</div>
<div class="t" style="left:524.30px;top:484px;font-size:14px;color:#484848;transform:scaleX(0.9914);">Design Document.docx</div>
<div class="t" style="left:1072.00px;top:485px;font-size:12px;color:#484848;transform:scaleX(0.9808);">08/25/2021 12:47:48</div>
<div class="t" style="left:1248.00px;top:484px;font-size:14px;color:#3b3a39;transform:scaleX(0.9439);">Jerry Hanks</div>
<div class="t" style="left:524.30px;top:526px;font-size:14px;color:#484848;transform:scaleX(0.9897);">Video Recording.mp4</div>
<div class="t" style="left:1072.00px;top:527px;font-size:12px;color:#484848;transform:scaleX(0.9888);">08/25/2021 11:23:51</div>
<div class="t" style="left:1248.00px;top:526px;font-size:14px;color:#3b3a39;transform:scaleX(0.9667);">Jordan Torres</div>
<div class="t" style="left:524.30px;top:568px;font-size:14px;color:#484848;transform:scaleX(0.9952);">Audio Recording.mp3</div>
<div class="t" style="left:1072.00px;top:569px;font-size:12px;color:#484848;transform:scaleX(0.9808);">08/25/2021 08:35:58</div>
<div class="t" style="left:1248.00px;top:568px;font-size:14px;color:#3b3a39;transform:scaleX(0.9666);">Thomas Henn</div>
<div class="t" style="left:414.40px;top:443px;font-size:14px;color:#f4f4f4;font-weight:bold;transform:scaleX(1.0005);">$</div>
<div class="t" style="left:477.83px;top:403px;font-size:8px;color:#fff;transform:scaleX(1.0005);">X</div>
<div class="t" style="left:478.03px;top:445px;font-size:8px;color:#fff;transform:scaleX(1.0005);">P</div>
<div class="t" style="left:477.25px;top:487px;font-size:8px;color:#fff;transform:scaleX(0.8595);">W</div>
</body>
</html>
